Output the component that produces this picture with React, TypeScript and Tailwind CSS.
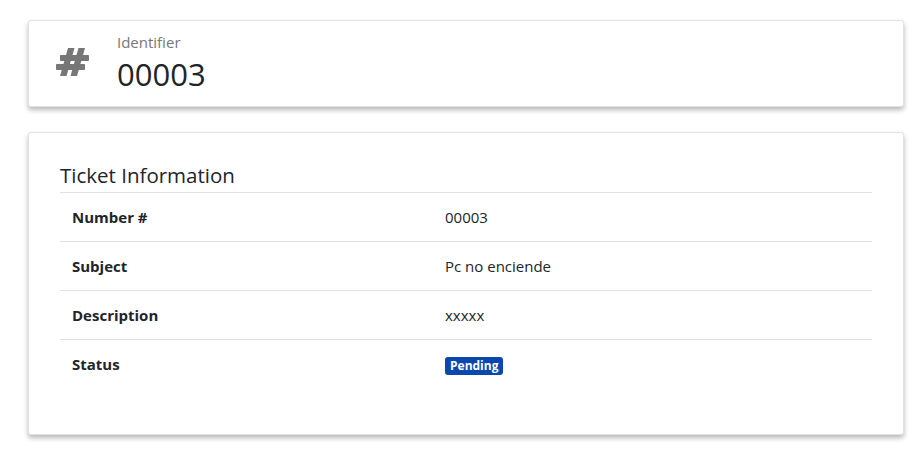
import React from "react";

const rows: { label: string; value: React.ReactNode }[] = [
  { label: "Number #", value: "00003" },
  { label: "Subject", value: "Pc no enciende" },
  { label: "Description", value: "xxxxx" },
  {
    label: "Status",
    value: (
      <span className="inline-flex h-[18px] items-center rounded-[3px] bg-[#0b48ad] px-[5px] text-[12px] font-bold leading-none text-white">
        Pending
      </span>
    ),
  },
];

function HashIcon() {
  return (
    <svg width="33" height="28" viewBox="3 2 33 28" fill="#777777" aria-hidden="true">
      <path d="M15 2 H21.5 L13.5 30 H7 Z" />
      <path d="M25.5 2 H32 L24 30 H17.5 Z" />
      <rect x="7" y="9" width="29" height="6" rx="0.8" />
      <rect x="3" y="18" width="29" height="6" rx="0.8" />
    </svg>
  );
}

export default function App() {
  return (
    <div
      className="min-h-[454px] bg-white pl-[28px] pr-[20px] pt-[20px] text-[#212529]"
      style={{ fontFamily: '"Open Sans", "Noto Sans", sans-serif' }}
    >
      <div className="flex h-[87px] items-center rounded-[3px] border border-[#e2e2e2] bg-white shadow-[0_3px_5px_rgba(0,0,0,0.28)]">
        <div className="flex w-[88px] justify-center pr-[2px] pb-[3px]">
          <HashIcon />
        </div>
        <div className="flex flex-col pb-[3px]">
          <div className="text-[15px] leading-[20px] text-[#777]">Identifier</div>
          <div className="mt-[3px] text-[31px] leading-[38px] text-[#212529]">00003</div>
        </div>
      </div>

      <div className="mt-[25px] h-[303px] rounded-[3px] border border-[#e2e2e2] bg-white px-[31px] pt-[27px] shadow-[0_3px_5px_rgba(0,0,0,0.28)]">
        <div className="border-b border-[#dee2e6] pb-[2px] text-[20.5px] leading-[30px]">
          Ticket Information
        </div>
        {rows.map((r, i) => (
          <div
            key={r.label}
            className={`grid h-[49px] grid-cols-[385px_1fr] items-center text-[15px] ${
              i < rows.length - 1 ? "border-b border-[#dee2e6]" : ""
            }`}
          >
            <div className="pl-[12px] font-bold">{r.label}</div>
            <div>{r.value}</div>
          </div>
        ))}
      </div>
    </div>
  );
}
